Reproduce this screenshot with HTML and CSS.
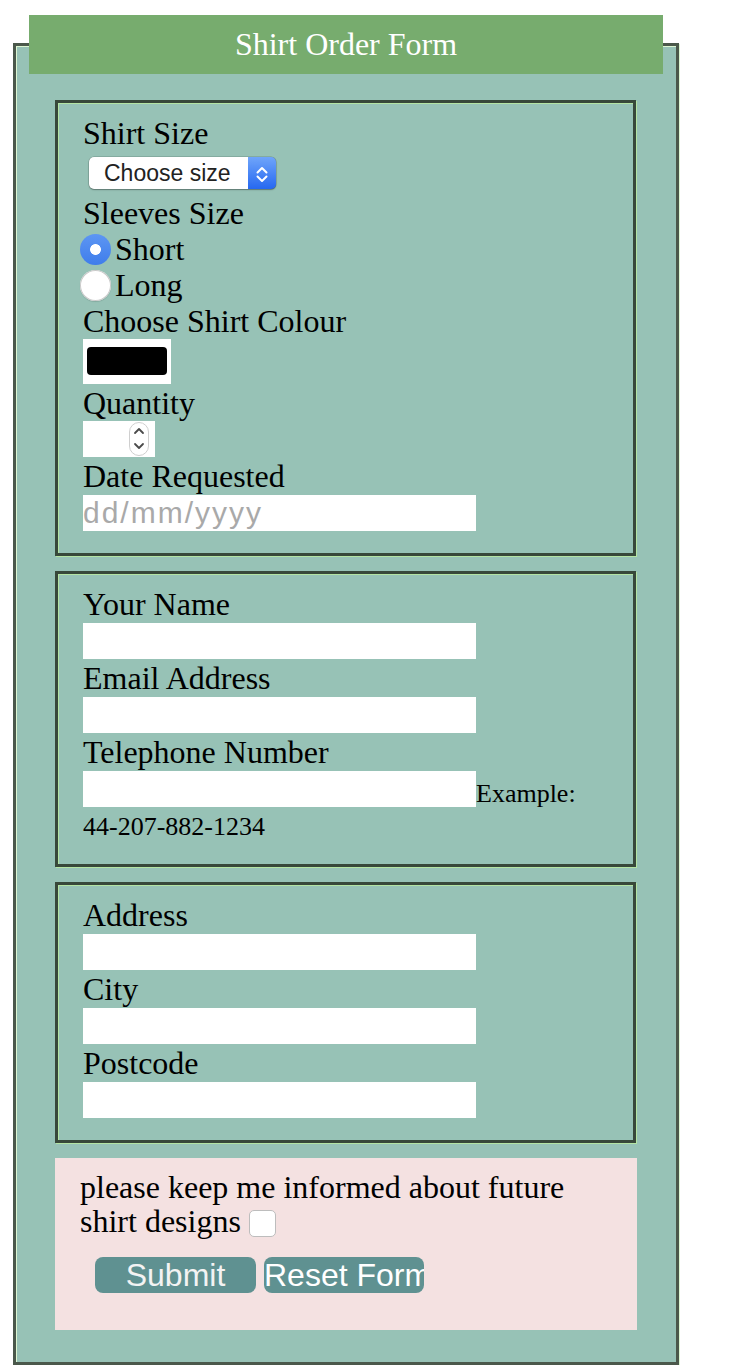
FILE: index.html
```html
<!DOCTYPE html>
<html lang="en">
<head>
<meta charset="utf-8">
<title>Shirt Order Form</title>
<link rel="stylesheet" href="styles.css">
</head>
<body>
<form class="order-form">
  <fieldset class="outer">
    <legend class="title">Shirt Order Form</legend>

    <fieldset class="group">
      <label class="field-label" for="size">Shirt Size</label>
      <span class="select-wrap">
        <select id="size" class="size-select">
          <option>Choose size</option>
          <option>Small</option>
          <option>Medium</option>
          <option>Large</option>
        </select>
        <svg class="select-arrow" width="28" height="32" viewBox="0 0 28 32" aria-hidden="true">
          <path d="M9.5 15.5 L14 11 L18.5 15.5 M9.5 19.5 L14 24 L18.5 19.5" fill="none" stroke="#fff" stroke-width="2" stroke-linecap="round" stroke-linejoin="round"/>
        </svg>
      </span>
      <span class="field-label">Sleeves Size</span>
      <label class="radio-row"><input class="radio" type="radio" name="sleeves" value="short" checked><span>Short</span></label>
      <label class="radio-row"><input class="radio" type="radio" name="sleeves" value="long"><span>Long</span></label>
      <label class="field-label" for="colour">Choose Shirt Colour</label>
      <input id="colour" class="colour-input" type="color" value="#000000">
      <label class="field-label" for="qty">Quantity</label>
      <span class="number-wrap">
        <input id="qty" class="number-input" type="number" min="1">
        <svg class="stepper" width="20" height="34" viewBox="0 0 20 34" aria-hidden="true">
          <rect x="0.5" y="0.5" width="19" height="33" rx="9.5" fill="#fff" stroke="#cfcfcf"/>
          <path d="M6 11 L10 7 L14 11 M6 22 L10 26 L14 22" fill="none" stroke="#4a4a4a" stroke-width="1.8" stroke-linecap="round" stroke-linejoin="round"/>
        </svg>
      </span>
      <label class="field-label" for="date">Date Requested</label>
      <input id="date" class="text-input date-input" type="text" placeholder="dd/mm/yyyy">
    </fieldset>

    <fieldset class="group">
      <label class="field-label" for="name">Your Name</label>
      <input id="name" class="text-input" type="text">
      <label class="field-label" for="email">Email Address</label>
      <input id="email" class="text-input" type="email">
      <label class="field-label" for="tel">Telephone Number</label>
      <div class="tel-row">
        <input id="tel" class="text-input tel-input" type="tel">
        <small class="hint">Example:</small>
      </div>
      <small class="hint hint-number">44-207-882-1234</small>
    </fieldset>

    <fieldset class="group">
      <label class="field-label" for="address">Address</label>
      <input id="address" class="text-input" type="text">
      <label class="field-label" for="city">City</label>
      <input id="city" class="text-input" type="text">
      <label class="field-label" for="postcode">Postcode</label>
      <input id="postcode" class="text-input" type="text">
    </fieldset>

    <div class="newsletter">
      <label class="newsletter-text" for="news">please keep me informed about future shirt designs <input id="news" class="checkbox" type="checkbox"></label>
      <div class="actions">
        <button class="btn" type="submit">Submit</button>
        <button class="btn" type="reset">Reset Form</button>
      </div>
    </div>
  </fieldset>
</form>
</body>
</html>
```

FILE: styles.css
```css
html, body {
  margin: 0;
  background: #ffffff;
}

body {
  font-family: "Liberation Serif", "Times New Roman", serif;
  color: #000;
}

.order-form {
  padding: 15px 0 0 13px;
}

.outer {
  box-sizing: border-box;
  width: 665px;
  margin: 0;
  padding: 26px 13px 32px 13px;
  background: #97c2b6;
  border: 3px solid #4b584b;
  box-shadow: inset 1px 1px 0 #ddf6d3, 1px 1px 0 #ddf6d3;
}

.title {
  box-sizing: border-box;
  width: 634px;
  height: 59px;
  padding: 0;
  background: #77ac6e;
  color: #ffffff;
  font-size: 32px;
  line-height: 59px;
  text-align: center;
}

.group {
  box-sizing: border-box;
  width: 581px;
  margin: 0 0 15px 26px;
  padding: 12px 24px 22px 25px;
  border: 3px solid #38483a;
  box-shadow: inset 1px 1px 0 #b4e4a4, 1px 1px 0 #b4e4a4;
  display: flex;
  flex-direction: column;
  align-items: flex-start;
  min-width: 0;
}

.field-label {
  display: block;
  font-size: 32px;
  line-height: 36px;
  white-space: nowrap;
}

/* select */
.select-wrap {
  position: relative;
  display: block;
  margin: 6px 0 6px 6px;
  height: 32px;
}

.size-select {
  -webkit-appearance: none;
  appearance: none;
  display: block;
  box-sizing: border-box;
  width: 187px;
  height: 32px;
  margin: 0;
  padding: 0 30px 0 15px;
  border: none;
  border-radius: 5px;
  background: linear-gradient(to bottom, #6fa5fa, #2668f1) no-repeat right top / 28px 100%, #ffffff;
  box-shadow: 0 0 0 0.5px rgba(0, 0, 0, 0.22), 0 1px 1.5px rgba(0, 0, 0, 0.3);
  font-family: "Liberation Sans", Arial, sans-serif;
  font-size: 23px;
  color: #222;
  outline: none;
}

.select-arrow {
  position: absolute;
  right: 0;
  top: 0;
  pointer-events: none;
}

/* radios */
.radio-row {
  display: flex;
  align-items: center;
  height: 36px;
  font-size: 32px;
  line-height: 36px;
  gap: 4px;
}

.radio {
  -webkit-appearance: none;
  appearance: none;
  width: 31px;
  height: 31px;
  margin: 0 0 0 -3px;
  border-radius: 50%;
  background: #ffffff;
  box-shadow: inset 0 0 0 1px #c9c9c9, 0 1px 1px rgba(0, 0, 0, 0.12);
  outline: none;
}

.radio:checked {
  background: radial-gradient(circle at 50% 50%, #ffffff 0 5px, transparent 5.8px), linear-gradient(to bottom, #5d96f3, #3f7deb);
  box-shadow: none;
}

/* colour */
.colour-input {
  display: block;
  width: 88px;
  height: 45px;
  margin: 0 0 1px;
  padding: 0;
  border: none;
  background: #ffffff;
  cursor: pointer;
}

.colour-input::-webkit-color-swatch-wrapper {
  padding: 8px 4px 9px 4px;
}

.colour-input::-webkit-color-swatch {
  border: none;
  border-radius: 4px;
}

/* number */
.number-wrap {
  position: relative;
  display: block;
  height: 36px;
  margin: 0 0 1px;
}

.number-input {
  display: block;
  box-sizing: border-box;
  width: 72px;
  height: 36px;
  margin: 0;
  padding: 0 28px 0 4px;
  border: none;
  background: #ffffff;
  font-family: "Liberation Sans", Arial, sans-serif;
  font-size: 26px;
  outline: none;
  -moz-appearance: textfield;
}

.number-input::-webkit-inner-spin-button,
.number-input::-webkit-outer-spin-button {
  -webkit-appearance: none;
  margin: 0;
}

.stepper {
  position: absolute;
  left: 46px;
  top: 1px;
  pointer-events: none;
}

/* text inputs */
.text-input {
  display: block;
  box-sizing: border-box;
  width: 393px;
  height: 36px;
  margin: 1px 0 1px;
  padding: 0;
  border: none;
  background: #ffffff;
  font-family: "Liberation Sans", Arial, sans-serif;
  font-size: 26px;
  outline: none;
}

.text-input:last-child {
  margin-bottom: 0;
}

.date-input {
  margin: 1px 0 0;
  font-size: 30px;
  letter-spacing: 2px;
}

.date-input::placeholder {
  color: #a9a9a9;
  opacity: 1;
}

.tel-row {
  display: flex;
  align-items: flex-end;
  height: 36px;
  margin-top: 1px;
}

.tel-input {
  margin: 0;
}

.hint {
  display: block;
  font-size: 26px;
  line-height: 26px;
}

.hint-number {
  margin-top: 5px;
  line-height: 30px;
}

/* newsletter */
.newsletter {
  box-sizing: border-box;
  width: 582px;
  margin: 0 0 0 26px;
  padding: 12px 25px 37px 25px;
  background: #f4e1e1;
}

.newsletter-text {
  display: block;
  font-size: 32px;
  line-height: 34px;
}

.checkbox {
  -webkit-appearance: none;
  appearance: none;
  box-sizing: border-box;
  width: 27px;
  height: 27px;
  margin: 0;
  vertical-align: -5px;
  border: 1px solid #bdbdbd;
  border-radius: 5px;
  background: #ffffff;
  outline: none;
}

.actions {
  display: flex;
  gap: 8px;
  margin-top: 19px;
  padding-left: 15px;
}

.btn {
  box-sizing: border-box;
  width: 161px;
  height: 36px;
  margin: 0;
  padding: 0;
  border: none;
  border-radius: 8px;
  background: #5f9191;
  color: #f3f3f3;
  font-family: "Liberation Sans", Arial, sans-serif;
  font-size: 32px;
  line-height: 36px;
  white-space: nowrap;
  overflow: hidden;
  text-align: center;
}

.btn[type="reset"] {
  width: 160px;
  text-align: left;
  color: #ffffff;
}
```
